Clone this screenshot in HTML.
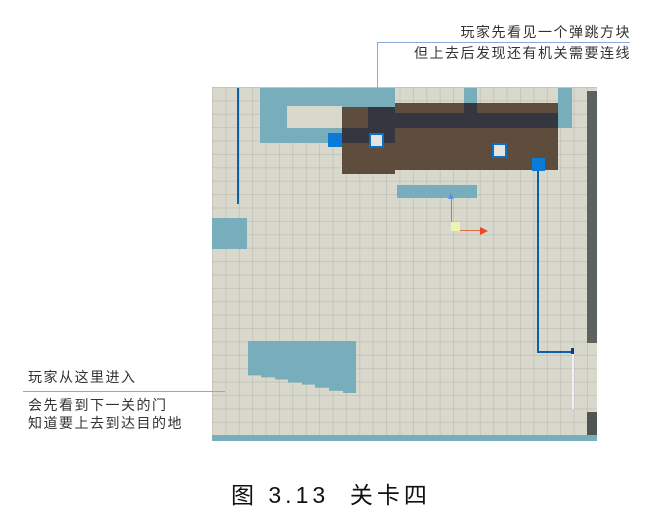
<!DOCTYPE html>
<html><head><meta charset="utf-8"><style>
body{margin:0;width:655px;height:529px;background:#fff;position:relative;overflow:hidden;font-family:"Liberation Sans","Noto Sans CJK SC",sans-serif;}
.a{position:absolute}
#map{position:absolute;left:212px;top:87px;width:385px;height:354px;background-color:#d9d8cd;
background-image:linear-gradient(to right,rgba(150,150,140,.28) 1px,transparent 1px),linear-gradient(to bottom,rgba(150,150,140,.28) 1px,transparent 1px);background-size:13.4px 13.4px;overflow:hidden}
.t{background:#78aebb}
.br{background:#5e4d3c}
.dk{background:#34373f}
.txt{position:absolute;font-size:14px;letter-spacing:1.5px;color:#333;white-space:nowrap;line-height:18px}
</style></head><body>
<div id="map">
 <div class="a t" style="left:48px;top:1px;width:135px;height:55px"></div>
 <div class="a" style="left:75px;top:19px;width:55px;height:22px;background:#d9d8cd"></div>
 <div class="a t" style="left:252px;top:1px;width:13px;height:18px"></div>
 <div class="a t" style="left:346px;top:1px;width:14px;height:40px"></div>
 <div class="a br" style="left:130px;top:20px;width:53px;height:67px"></div>
 <div class="a br" style="left:183px;top:16px;width:163px;height:67px"></div>
 <div class="a dk" style="left:183px;top:26px;width:163px;height:15px"></div>
 <div class="a dk" style="left:130px;top:41px;width:53px;height:15px"></div>
 <div class="a dk" style="left:156px;top:20px;width:27px;height:21px"></div>
 <div class="a dk" style="left:252px;top:16px;width:13px;height:10px"></div>
 <div class="a" style="left:116px;top:46px;width:14px;height:14px;background:#0a7bd6"></div>
 <div class="a" style="left:157px;top:46px;width:11px;height:11px;background:#e6e4da;border:2px solid #0a6fc8"></div>
 <div class="a" style="left:280px;top:56px;width:11px;height:11px;background:#e6e4da;border:2px solid #0a6fc8"></div>
 <div class="a" style="left:320px;top:71px;width:13px;height:13px;background:#0a7bd6"></div>
 <div class="a" style="left:325px;top:84px;width:2px;height:182px;background:#0d5fa8"></div>
 <div class="a" style="left:325px;top:264px;width:35px;height:2px;background:#0d5fa8"></div>
 <div class="a" style="left:359px;top:261px;width:3px;height:6px;background:#0d3f7a"></div>
 <div class="a" style="left:360px;top:267px;width:2px;height:55px;background:#eef"></div>
 <div class="a" style="left:25px;top:1px;width:2px;height:116px;background:#0d5fa8"></div>
 <div class="a t" style="left:185px;top:98px;width:80px;height:13px"></div>
 <div class="a" style="left:239px;top:108px;width:1px;height:28px;background:#5b8ff0"></div>
 <div class="a" style="left:236px;top:106px;border:3px solid transparent;border-bottom:6px solid #5b8ff0;border-top:0"></div>
 <div class="a" style="left:239px;top:135px;width:9px;height:9px;background:#e8f6b0"></div>
 <div class="a" style="left:248px;top:143px;width:22px;height:1px;background:#e86a4a"></div>
 <div class="a" style="left:268px;top:140px;border:4px solid transparent;border-left:8px solid #e84a2a;border-right:0"></div>
 <div class="a t" style="left:0;top:131px;width:35px;height:31px"></div>
 <div class="a t" style="left:36px;top:254px;width:108px;height:52px;clip-path:polygon(0 0,100% 0,100% 100%,88% 100%,88% 96%,75% 96%,75% 90%,62% 90%,62% 84%,50% 84%,50% 80%,37% 80%,37% 74%,25% 74%,25% 70%,12% 70%,12% 66%,0 66%)"></div>
 <div class="a" style="left:375px;top:4px;width:10px;height:252px;background:#5c625d"></div>
 <div class="a" style="left:375px;top:325px;width:10px;height:29px;background:#4f5553"></div>
 <div class="a t" style="left:0;top:348px;width:385px;height:6px"></div>
</div>
<div class="a" style="left:377px;top:42px;width:253px;height:1px;background:#8fa8d8"></div>
<div class="a" style="left:377px;top:42px;width:1px;height:46px;background:#8fa8d8"></div>
<div class="txt" style="right:24px;top:23px">玩家先看见一个弹跳方块</div>
<div class="txt" style="right:24px;top:44px">但上去后发现还有机关需要连线</div>
<div class="a" style="left:23px;top:391px;width:202px;height:1px;background:#8fa8d8"></div>
<div class="txt" style="left:28px;top:368px">玩家从这里进入</div>
<div class="txt" style="left:28px;top:396px">会先看到下一关的门</div>
<div class="txt" style="left:28px;top:414px">知道要上去到达目的地</div>
<div class="a" style="left:231px;top:481px;font-size:23px;letter-spacing:4px;color:#111;white-space:pre;line-height:28px">图 3.13  关卡四</div>
</body></html>
